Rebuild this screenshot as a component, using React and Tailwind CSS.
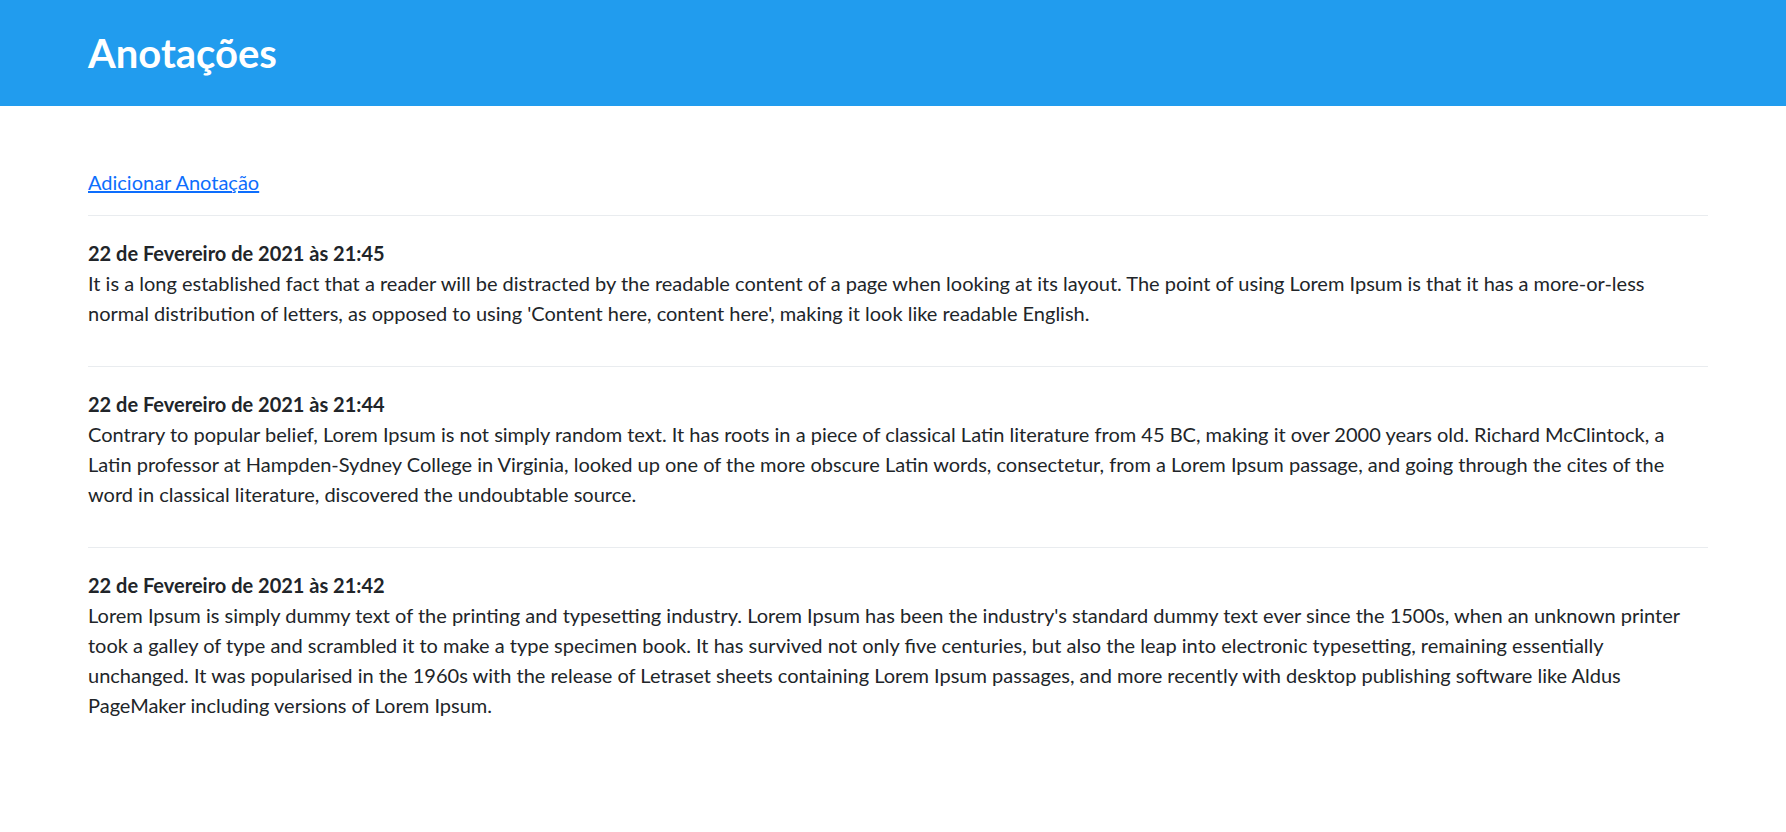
import React from 'react';

const notes = [
  {
    date: '22 de Fevereiro de 2021 às 21:45',
    text: "It is a long established fact that a reader will be distracted by the readable content of a page when looking at its layout. The point of using Lorem Ipsum is that it has a more-or-less normal distribution of letters, as opposed to using 'Content here, content here', making it look like readable English.",
  },
  {
    date: '22 de Fevereiro de 2021 às 21:44',
    text: 'Contrary to popular belief, Lorem Ipsum is not simply random text. It has roots in a piece of classical Latin literature from 45 BC, making it over 2000 years old. Richard McClintock, a Latin professor at Hampden-Sydney College in Virginia, looked up one of the more obscure Latin words, consectetur, from a Lorem Ipsum passage, and going through the cites of the word in classical literature, discovered the undoubtable source.',
  },
  {
    date: '22 de Fevereiro de 2021 às 21:42',
    text: "Lorem Ipsum is simply dummy text of the printing and typesetting industry. Lorem Ipsum has been the industry's standard dummy text ever since the 1500s, when an unknown printer took a galley of type and scrambled it to make a type specimen book. It has survived not only five centuries, but also the leap into electronic typesetting, remaining essentially unchanged. It was popularised in the 1960s with the release of Letraset sheets containing Lorem Ipsum passages, and more recently with desktop publishing software like Aldus PageMaker including versions of Lorem Ipsum.",
  },
];

const App = () => {
  return (
    <div className="min-h-screen bg-white font-['Lato',sans-serif] text-[#212529]">
      <header className="bg-[#219cee] h-[106px] flex items-center px-[88px]">
        <h1 className="text-white text-[40px] leading-[48px] font-bold">Anotações</h1>
      </header>

      <main className="pl-[88px] pr-[78px]">
        <div className="pt-[61px] pb-[18px] text-[20px] leading-[30px]">
          <a href="#" className="text-[#0d6efd] underline">
            Adicionar Anotação
          </a>
        </div>

        {notes.map((note) => (
          <div key={note.date} className="border-t border-[#e9ecef] pt-[22px] pb-[38px]">
            <div className="text-[20px] leading-[30px] font-bold">{note.date}</div>
            <p className="text-[20px] leading-[30px]">{note.text}</p>
          </div>
        ))}
      </main>
    </div>
  );
};

export default App;
